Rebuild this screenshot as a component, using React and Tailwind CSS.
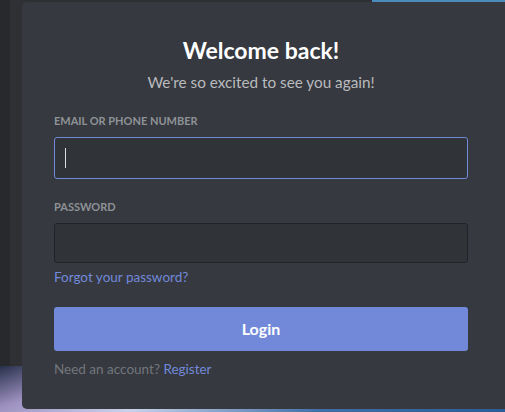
export default function App() {
  return (
    <div className="relative w-[505px] h-[412px] overflow-hidden bg-[linear-gradient(to_right,#28292d_0px,#28292d_10px,#2e3034_10px)] font-['Lato','Noto_Sans',sans-serif]">
      {/* backdrop bits peeking around the modal */}
      <div className="absolute top-0 left-[372px] right-0 h-[3px] bg-[#4b8cbd]" />
      <div className="absolute bottom-0 left-0 w-full h-[46px] bg-[linear-gradient(160deg,#27304a_0%,#9d90c0_18%,#c9d3ea_40%,#3f6fa8_70%,#2a5d99_100%)]" />

      <div className="relative mt-[2px] ml-[22px] w-[495px] rounded-[5px] bg-[#36393f] pt-[33px] pb-[32px] pl-[32px] pr-[49px]">
        <h1 className="text-center text-[23px] leading-[30px] font-bold text-white">Welcome back!</h1>
        <p className="mt-[7px] text-center text-[15.3px] leading-[20px] text-[#b9bbbe]">
          We're so excited to see you again!
        </p>

        <div className="mt-[21px] text-[11px] leading-[16px] font-bold text-[#8e9297]">
          EMAIL OR PHONE NUMBER
        </div>
        <div className="mt-[8px] h-[42px] rounded-[3px] border border-[#7289da] bg-[#303338] flex items-center pl-[10px]">
          <div className="w-px h-[20px] bg-[#dcddde]" />
        </div>

        <div className="mt-[20px] text-[11px] leading-[16px] font-bold text-[#8e9297]">
          PASSWORD
        </div>
        <div className="mt-[8px] h-[40px] rounded-[3px] border border-[#222327] bg-[#303338]" />

        <div className="mt-[6px] text-[13.5px] leading-[16px] text-[#7289da]">Forgot your password?</div>

        <button className="mt-[22px] w-full h-[44px] rounded-[3px] bg-[#7289da] text-white text-[16px] font-bold">
          Login
        </button>

        <div className="mt-[10px] text-[13.5px] leading-[16px] text-[#72767d]">
          Need an account? <span className="text-[#7289da]">Register</span>
        </div>
      </div>
    </div>
  );
}
